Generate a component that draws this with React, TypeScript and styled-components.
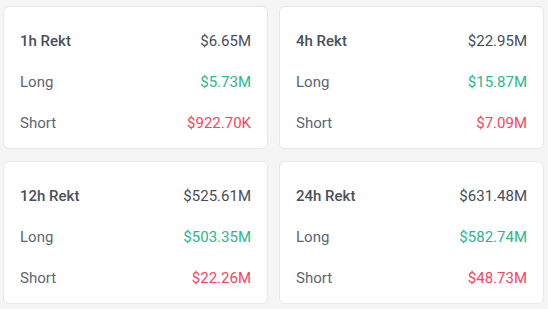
import React from "react";
import styled, { createGlobalStyle } from "styled-components";

const GlobalStyle = createGlobalStyle`
  html, body {
    margin: 0;
    padding: 0;
    background: #f5f5f5;
    font-family: Roboto, "Liberation Sans", sans-serif;
  }
`;

const Grid = styled.div`
  display: grid;
  grid-template-columns: 265px 265px;
  column-gap: 11px;
  row-gap: 12px;
  padding: 6px 0 0 3px;
`;

const Card = styled.div`
  background: #ffffff;
  border: 1px solid #e6e8ea;
  border-radius: 6px;
  height: 143px;
  box-sizing: border-box;
  padding: 22px 16px 13px;
  display: flex;
  flex-direction: column;
  gap: 17px;
`;

const Row = styled.div`
  display: flex;
  justify-content: space-between;
  align-items: center;
  height: 24px;
  font-size: 15px;
  line-height: 24px;
`;

const Label = styled.span<{ $head?: boolean }>`
  color: ${(p) => (p.$head ? "#4a505a" : "#5e6673")};
  font-weight: ${(p) => (p.$head ? 500 : 400)};
`;

const Value = styled.span<{ $tone: "base" | "up" | "down" }>`
  color: ${(p) =>
    p.$tone === "up" ? "#2db58f" : p.$tone === "down" ? "#f6465d" : "#474d57"};
`;

const data = [
  { period: "1h", total: "$6.65M", long: "$5.73M", short: "$922.70K" },
  { period: "4h", total: "$22.95M", long: "$15.87M", short: "$7.09M" },
  { period: "12h", total: "$525.61M", long: "$503.35M", short: "$22.26M" },
  { period: "24h", total: "$631.48M", long: "$582.74M", short: "$48.73M" },
];

export default function App() {
  return (
    <>
      <GlobalStyle />
      <Grid>
        {data.map((d) => (
          <Card key={d.period}>
            <Row>
              <Label $head>{d.period} Rekt</Label>
              <Value $tone="base">{d.total}</Value>
            </Row>
            <Row>
              <Label>Long</Label>
              <Value $tone="up">{d.long}</Value>
            </Row>
            <Row>
              <Label>Short</Label>
              <Value $tone="down">{d.short}</Value>
            </Row>
          </Card>
        ))}
      </Grid>
    </>
  );
}
